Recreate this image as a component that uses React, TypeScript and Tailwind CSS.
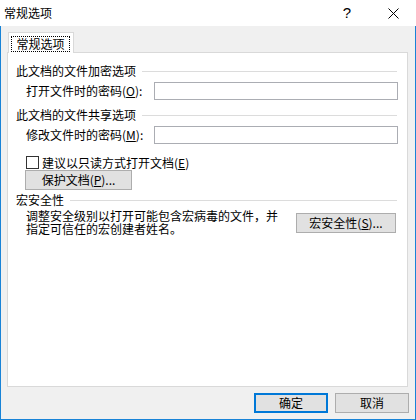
import React from "react";

const font = { fontFamily: '"Noto Sans CJK SC", "Noto Sans", sans-serif' };

function Heading({ text }: { text: string }) {
  return (
    <div className="flex items-center h-[14px] pl-[8px] pr-[10px]">
      <span className="whitespace-nowrap">{text}</span>
      <div className="flex-1 h-px bg-[#dcdcdc] ml-[6px]" />
    </div>
  );
}

function InputRow({ label, k }: { label: string; k: string }) {
  return (
    <div className="flex items-center h-[18px] pl-[18px] pr-[9px] mt-[4px]">
      <span className="whitespace-nowrap">
        {label}(<u>{k}</u>):
      </span>
      <div className="ml-auto w-[244px] h-[18px] border border-[#abadb3] bg-white" />
    </div>
  );
}

export default function App() {
  return (
    <div
      className="w-[416px] h-[420px] flex flex-col text-[12px] leading-[12px] text-black select-none"
      style={font}
    >
      <div className="h-[26px] bg-white flex items-center shrink-0">
        <span className="pl-[4px] flex-1">常规选项</span>
        <div className="w-[46px] h-[26px] flex items-center justify-center text-[15px]" style={{ fontFamily: '"Liberation Sans", sans-serif' }}>
          ?
        </div>
        <div className="w-[46px] h-[26px] flex items-center justify-center">
          <svg width="11" height="11" viewBox="0 0 11 11">
            <path d="M0.5 0.5 L10.5 10.5 M10.5 0.5 L0.5 10.5" stroke="#000" strokeWidth="1" />
          </svg>
        </div>
      </div>
      <div className="flex-1 bg-[#f0f0f0] border-l border-r border-b border-[#1883d7] px-[6px] pt-[6px] flex flex-col">
        <div className="flex">
          <div className="ml-[1px] w-[66px] h-[21px] mb-[-1px] relative z-10 bg-white border-t border-l border-r border-[#d9d9d9] pl-[2px] pt-[3px]">
            <div className="w-[59px] h-[16px] border border-dotted border-black flex items-center justify-center">
              常规选项
            </div>
          </div>
        </div>
        <div className="w-[401px] h-[335px] border border-[#d9d9d9] bg-white flex flex-col">
          <div className="mt-[11px]">
            <Heading text="此文档的文件加密选项" />
          </div>
          <InputRow label="打开文件时的密码" k="O" />
          <div className="mt-[8px]">
            <Heading text="此文档的文件共享选项" />
          </div>
          <InputRow label="修改文件时的密码" k="M" />
          <div className="flex items-center h-[13px] mt-[12px] pl-[18px]">
            <div className="w-[13px] h-[13px] border border-[#333333] bg-white" />
            <span className="ml-[3px] whitespace-nowrap">
              建议以只读方式打开文档(<u>E</u>)
            </span>
          </div>
          <div className="mt-[1px] pl-[17px]">
            <div className="w-[107px] h-[20px] bg-[#e1e1e1] border border-[#adadad] flex items-center justify-center whitespace-nowrap">
              保护文档(<u>P</u>)...
            </div>
          </div>
          <div className="mt-[3px]">
            <Heading text="宏安全性" />
          </div>
          <div className="mt-[2px] flex pl-[18px] pr-[11px]">
            <div className="whitespace-nowrap leading-[13px]">
              调整安全级别以打开可能包含宏病毒的文件，并
              <br />
              指定可信任的宏创建者姓名。
            </div>
            <div className="ml-auto mt-[4px] w-[100px] h-[20px] bg-[#e1e1e1] border border-[#adadad] flex items-center justify-center whitespace-nowrap">
              宏安全性(<u>S</u>)...
            </div>
          </div>
        </div>
        <div className="mt-[6px] flex justify-end gap-[7px]">
          <div className="w-[74px] h-[20px] bg-[#e1e1e1] border-2 border-[#0078d7] flex items-center justify-center">
            确定
          </div>
          <div className="w-[74px] h-[20px] bg-[#e1e1e1] border border-[#adadad] flex items-center justify-center">
            取消
          </div>
        </div>
      </div>
    </div>
  );
}
